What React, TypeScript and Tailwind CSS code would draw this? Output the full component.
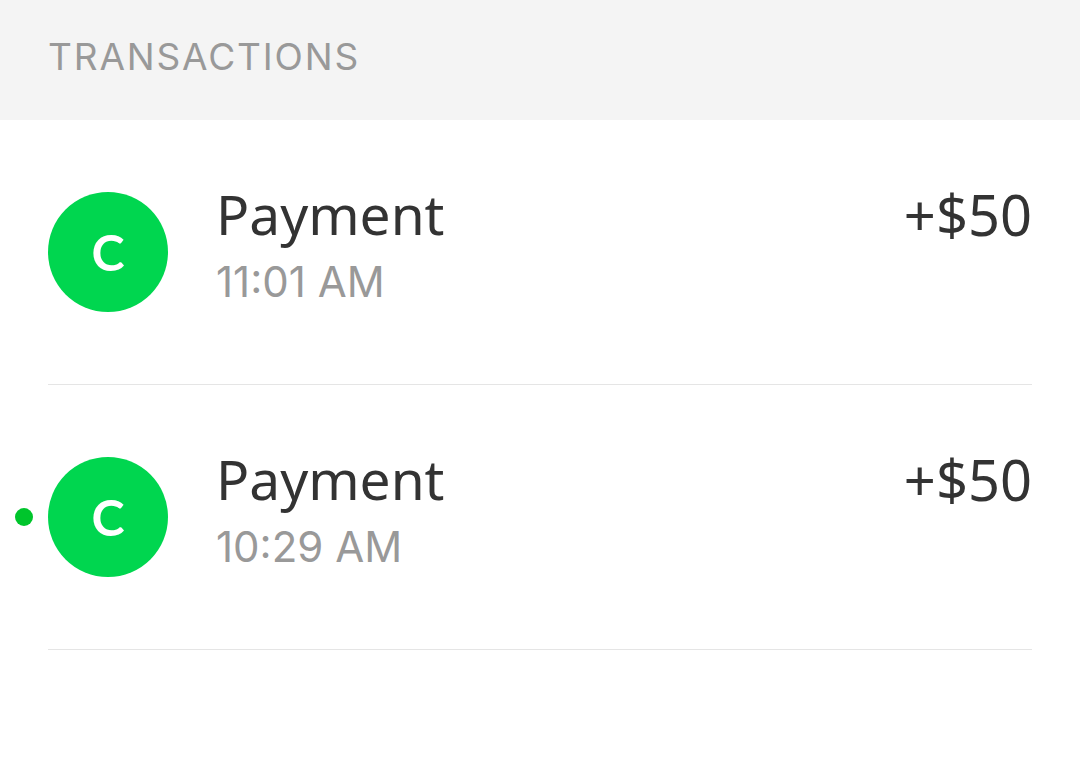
import React from "react";

interface Transaction {
    id: number;
    initial: string;
    title: string;
    time: string;
    amount: string;
    unread: boolean;
}

const transactions: Transaction[] = [
    { id: 1, initial: "C", title: "Payment", time: "11:01 AM", amount: "+$50", unread: false },
    { id: 2, initial: "C", title: "Payment", time: "10:29 AM", amount: "+$50", unread: true },
];

function TransactionRow({ item }: { item: Transaction }) {
    return (
        <li className="relative flex items-start border-b border-[#e5e5e5] py-[72px]">
            {/* Unread dot sits in the page gutter */}
            {item.unread && (
                <span className="absolute top-[123px] -left-[33px] size-[18px] rounded-full bg-[#00c52c]" />
            )}
            <div className="flex size-[120px] shrink-0 items-center justify-center rounded-full bg-[#00d64f] font-['Lato',sans-serif] text-[50px] font-bold text-white">
                {item.initial}
            </div>
            <div className="ml-12 grow">
                <div className="text-[55px] leading-[44px] text-[#333333]">{item.title}</div>
                <div className="mt-[22px] font-['Inter',sans-serif] text-[42px] leading-[48px] text-[#999999]">
                    {item.time}
                </div>
            </div>
            <div className="text-[56px] leading-[44px] text-[#333333]">{item.amount}</div>
        </li>
    );
}

export default function App() {
    return (
        <main className="min-h-screen bg-white font-['Noto_Sans',sans-serif]">
            <header className="flex h-[120px] items-start bg-[#f4f4f4] px-12 pt-[33px]">
                <h1 className="font-['Inter',sans-serif] text-[37px] leading-[48px] tracking-wider text-[#999999]">
                    TRANSACTIONS
                </h1>
            </header>
            <ul className="px-12">
                {transactions.map((item) => (
                    <TransactionRow key={item.id} item={item} />
                ))}
            </ul>
        </main>
    );
}
